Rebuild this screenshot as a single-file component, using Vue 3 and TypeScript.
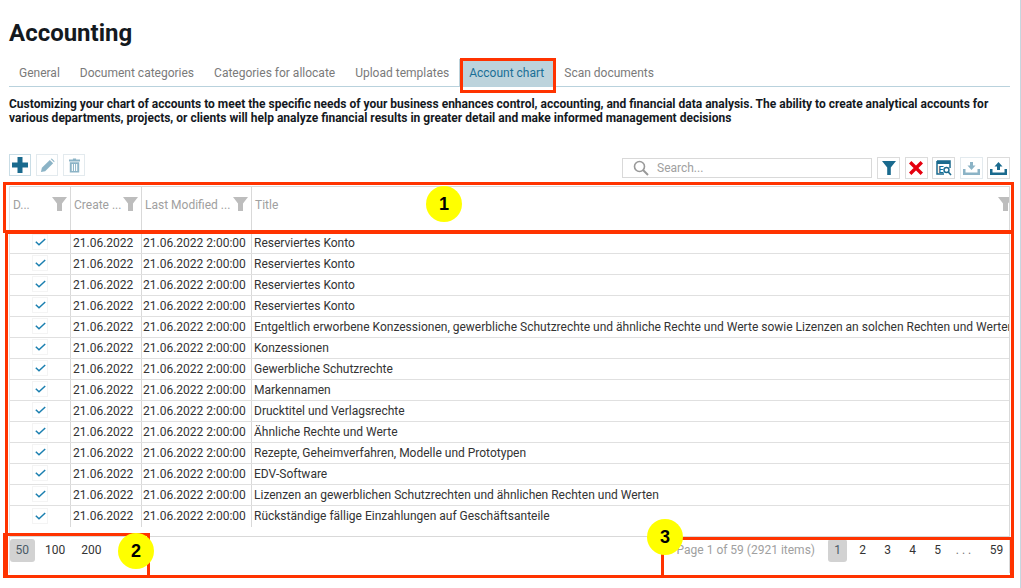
<script setup lang="ts">
interface Row { title: string }
const titles: string[] = [
  'Reserviertes Konto',
  'Reserviertes Konto',
  'Reserviertes Konto',
  'Reserviertes Konto',
  'Entgeltlich erworbene Konzessionen, gewerbliche Schutzrechte und ähnliche Rechte und Werte sowie Lizenzen an solchen Rechten und Werten',
  'Konzessionen',
  'Gewerbliche Schutzrechte',
  'Markennamen',
  'Drucktitel und Verlagsrechte',
  'Ähnliche Rechte und Werte',
  'Rezepte, Geheimverfahren, Modelle und Prototypen',
  'EDV-Software',
  'Lizenzen an gewerblichen Schutzrechten und ähnlichen Rechten und Werten',
  'Rückständige fällige Einzahlungen auf Geschäftsanteile',
]
const rows: Row[] = titles.map((title) => ({ title }))
const tabs = ['General', 'Document categories', 'Categories for allocate', 'Upload templates', 'Account chart', 'Scan documents']
const headers = [
  { label: 'D...', cls: 'c1' },
  { label: 'Create ...', cls: 'c2' },
  { label: 'Last Modified ...', cls: 'c3' },
  { label: 'Title', cls: 'c4' },
]
const pages = ['2', '3', '4', '5']
</script>

<template>
  <div class="page">
    <h1 class="title">Accounting</h1>
    <nav class="tabs">
      <span v-for="t in tabs" :key="t" class="tab" :class="{ active: t === 'Account chart' }">{{ t }}</span>
    </nav>
    <p class="desc">Customizing your chart of accounts to meet the specific needs of your business enhances control, accounting, and financial data analysis. The ability to create analytical accounts for various departments, projects, or clients will help analyze financial results in greater detail and make informed management decisions</p>

    <div class="toolbar">
      <div class="tools">
        <button class="tool">
          <svg width="16" height="16" viewBox="0 0 16 16"><path d="M5.500 0h5v5.500H16v5h-5.500V16h-5v-5.500H0v-5h5.500z" fill="#1a6a8e" /></svg>
        </button>
        <button class="tool faded">
          <svg width="15" height="15" viewBox="0 0 16 16"><path d="M1 15l1-4.500L10.500 2l3.500 3.500L5.500 14zM11.500 1l1-.5 3 3-.5 1z" fill="#1a6a8e" /></svg>
        </button>
        <button class="tool faded">
          <svg width="11" height="15" viewBox="0 0 14 18"><path d="M5 0h4v1.500h5V4H0V1.500h5zM1 5h12v13H1zM3.500 7v9h1.500V7zM6.300 7v9h1.500V7zM9 7v9h1.500V7z" fill="#1a6a8e" fill-rule="evenodd" /></svg>
        </button>
      </div>
      <div class="tools right">
        <label class="search">
          <svg width="16" height="16" viewBox="0 0 16 16"><circle cx="6.500" cy="6.500" r="5" fill="none" stroke="#999" stroke-width="1.600" /><path d="M10 10l5 5" stroke="#999" stroke-width="2" /></svg>
          <span>Search...</span>
        </label>
        <button class="tool sq">
          <svg width="14" height="14" viewBox="0 0 14 14"><path d="M0 0h14L8.800 6.500V14H5.200V6.500z" fill="#1a6a8e" /></svg>
        </button>
        <button class="tool sq">
          <svg width="14" height="14" viewBox="0 0 14 14"><path d="M1.200 1.200l11.600 11.600M12.800 1.200L1.200 12.800" stroke="#e5000f" stroke-width="3.400" /></svg>
        </button>
        <button class="tool sq">
          <svg width="16" height="16" viewBox="0 0 16 16">
            <path d="M1 1h13v7M1 1v13h7" fill="none" stroke="#1a6a8e" stroke-width="1.500" />
            <path d="M1 1h13v3H1z" fill="#1a6a8e" />
            <text x="2.500" y="12.500" class="eq">E</text>
            <circle cx="10.500" cy="10" r="2.500" fill="none" stroke="#1a6a8e" stroke-width="1.400" />
            <path d="M12.300 12l2.700 3" stroke="#1a6a8e" stroke-width="1.600" />
          </svg>
        </button>
        <button class="tool sq faded">
          <svg width="17" height="13" viewBox="0 0 17 13"><path d="M7 0h3v3.500h2.500L8.500 8l-4-4.500H7zM0 7h2.500v3.500h12V7H17v6H0z" fill="#1a6a8e" /></svg>
        </button>
        <button class="tool sq">
          <svg width="17" height="13" viewBox="0 0 17 13"><path d="M8.500 0l4 4.500H10V8H7V4.500H4.500zM0 7h2.500v3.500h12V7H17v6H0z" fill="#1a6a8e" /></svg>
        </button>
      </div>
    </div>

    <div class="grid">
      <div class="head">
        <div v-for="h in headers" :key="h.cls" class="hcell" :class="h.cls">
          <span class="hlabel">{{ h.label }}</span>
          <svg class="funnel" width="15" height="14" viewBox="0 0 15 14"><path d="M0 0h15L10 6.500V14H5V6.500z" fill="#bdbdbd" /></svg>
        </div>
      </div>
      <div class="body">
        <div v-for="(r, i) in rows" :key="i" class="row">
          <div class="cell c1 check">
            <span class="box">
              <svg width="11" height="8" viewBox="0 0 11 8"><path d="M.8 3.800L4 6.800 10.200 1" fill="none" stroke="#1a7fb0" stroke-width="1.500" /></svg>
            </span>
          </div>
          <div class="cell c2">21.06.2022</div>
          <div class="cell c3">21.06.2022 2:00:00</div>
          <div class="cell c4">{{ r.title }}</div>
        </div>
      </div>
      <div class="pager">
        <div class="sizes">
          <span class="pg on wide">50</span>
          <span class="pg wide">100</span>
          <span class="pg wide">200</span>
        </div>
        <div class="nums">
          <span class="info">Page 1 of 59 (2921 items)</span>
          <span class="pg on">1</span>
          <span v-for="p in pages" :key="p" class="pg">{{ p }}</span>
          <span class="pg dots">. . .</span>
          <span class="pg last">59</span>
        </div>
      </div>
    </div>

    <div class="mark m1"></div>
    <div class="mark m-body"></div>
    <div class="mark m2"></div>
    <div class="mark m3"></div>
    <div class="mark m-tab"></div>
    <span class="dot d1">1</span>
    <span class="dot d2">2</span>
    <span class="dot d3">3</span>
  </div>
</template>

<style>
html, body { margin: 0; background: #fff; }
</style>

<style scoped>
.page {
  position: relative;
  box-sizing: border-box;
  width: 1021px;
  height: 588px;
  padding: 0 10px 0 9px;
  overflow: hidden;
  border-right: 1px solid #c5d8e0;
  font-family: Roboto, "Liberation Sans", sans-serif;
  font-size: 12px;
  color: #333;
  background: #fff;
}
.title {
  margin: 0;
  padding-top: 19px;
  font-size: 24px;
  line-height: 28px;
  font-weight: 700;
  color: #14191e;
}
.tabs {
  display: flex;
  margin-top: 12px;
  height: 27px;
  border-bottom: 1px solid #b9d2dd;
}
.tab {
  padding: 0 10px;
  line-height: 28px;
  color: #7a7a7a;
}
.active {
  background: #bcd3dc;
  color: #1a6f96;
}
.desc {
  margin: 10px 0 0;
  font-size: 12px;
  line-height: 14px;
  font-weight: 700;
  color: #14191e;
}
.toolbar {
  display: flex;
  justify-content: space-between;
  align-items: flex-start;
  margin-top: 28px;
  height: 24px;
}
.tools {
  display: flex;
  gap: 5px;
  align-items: center;
  padding-top: 1px;
}
.tools.right { gap: 4.500px; padding-top: 4px; }
.tool {
  display: flex;
  align-items: center;
  justify-content: center;
  box-sizing: border-box;
  width: 22px;
  height: 22px;
  padding: 0;
  background: #fff;
  border: 1px solid #c9dde6;
}
.tool.sq {
  width: 23px;
  border-color: #dcdcdc;
}
.faded svg { opacity: 0.5; }
.tool.faded { border-color: #e3eaee; }
.eq {
  font-family: Roboto, "Liberation Sans", sans-serif;
  font-size: 9px;
  font-weight: 700;
  fill: #1a6a8e;
}
.search {
  display: flex;
  align-items: center;
  gap: 8px;
  box-sizing: border-box;
  width: 250px;
  height: 20px;
  padding-left: 10px;
  margin-right: 0.500px;
  border: 1px solid #d9d9d9;
  color: #a0a0a0;
}
.grid {
  margin-top: 9px;
  border-right: 1px solid #d9d9d9;
  border-left: 1px solid #e4e4e4;
}
.head {
  display: flex;
  height: 43px;
  border-top: 1px solid #d9d9d9;
  border-bottom: 3px solid #d9d9d9;
}
.c1 { width: 61px; }
.c2 { width: 71px; }
.c3 { width: 110px; }
.c4 { flex: 1; min-width: 0; }
.hcell {
  display: flex;
  align-items: center;
  justify-content: space-between;
  box-sizing: border-box;
  padding: 0 3px 8px 3px;
  border-right: 1px solid #d9d9d9;
  color: #a0a0a0;
}
.hcell.c4 { border-right: 0; padding-right: 0; overflow: hidden; }
.hcell.c4 .funnel { margin-right: -4px; }
.hlabel { white-space: nowrap; }
.funnel { flex: none; margin-top: -2px; }
.body {
  height: 303px;
  border-bottom: 1px solid #d9d9d9;
}
.row {
  display: flex;
  height: 21px;
  box-sizing: border-box;
  border-bottom: 1px solid #e0e0e0;
}
.row:last-child { border-bottom: 0; }
.cell {
  box-sizing: border-box;
  padding: 0 2px;
  line-height: 20px;
  white-space: nowrap;
  overflow: hidden;
  border-right: 1px solid #d9d9d9;
  color: #333;
}
.cell.c3 { padding-left: 1px; }
.cell.c4 { border-right: 0; }
.check {
  display: flex;
  align-items: center;
  padding: 0 0 0 22px;
}
.box {
  display: flex;
  align-items: center;
  justify-content: center;
  box-sizing: border-box;
  width: 16px;
  height: 16px;
  margin-top: -2px;
  border: 1px solid #f4f4f4;
}
.pager {
  display: flex;
  justify-content: space-between;
  align-items: flex-start;
  padding-top: 2px;
  height: 34px;
}
.sizes { display: flex; gap: 5px; }
.nums { display: flex; align-items: flex-start; }
.pg {
  box-sizing: border-box;
  min-width: 19px;
  height: 23px;
  line-height: 22px;
  margin-left: 6px;
  text-align: center;
  border-radius: 3px;
  color: #333;
}
.pg.wide { padding: 0 5.500px; margin: 0; }
.pg.on { background: #d2d2d2; color: #4a5a66; }
.pg.dots { width: 21px; color: #777; white-space: nowrap; }
.pg.last { width: 25px; margin-left: 10px; }
.info {
  color: #a0a0a0;
  line-height: 22px;
  margin-right: 7px;
}
.mark {
  position: absolute;
  box-sizing: border-box;
  border: 3px solid #ff3300;
  pointer-events: none;
}
.m1 { left: 3px; top: 182px; width: 1011px; height: 51px; }
.m-body { left: 5px; top: 232px; width: 1009px; height: 346px; border-width: 2px 3px 3px 3px; }
.m2 { left: 3px; top: 533px; width: 147px; height: 45px; }
.m3 { left: 661px; top: 537px; width: 352px; height: 41px; }
.m-tab { left: 460px; top: 58px; width: 96px; height: 35px; }
.dot {
  position: absolute;
  width: 36px;
  height: 36px;
  border-radius: 50%;
  background: #ffff00;
  color: #000;
  font-family: "Liberation Sans", Arial, sans-serif;
  font-size: 18px;
  font-weight: 700;
  line-height: 36px;
  text-align: center;
}
.d1 { left: 426px; top: 186px; }
.d2 { left: 118px; top: 533px; }
.d3 { left: 647px; top: 519px; }
</style>
